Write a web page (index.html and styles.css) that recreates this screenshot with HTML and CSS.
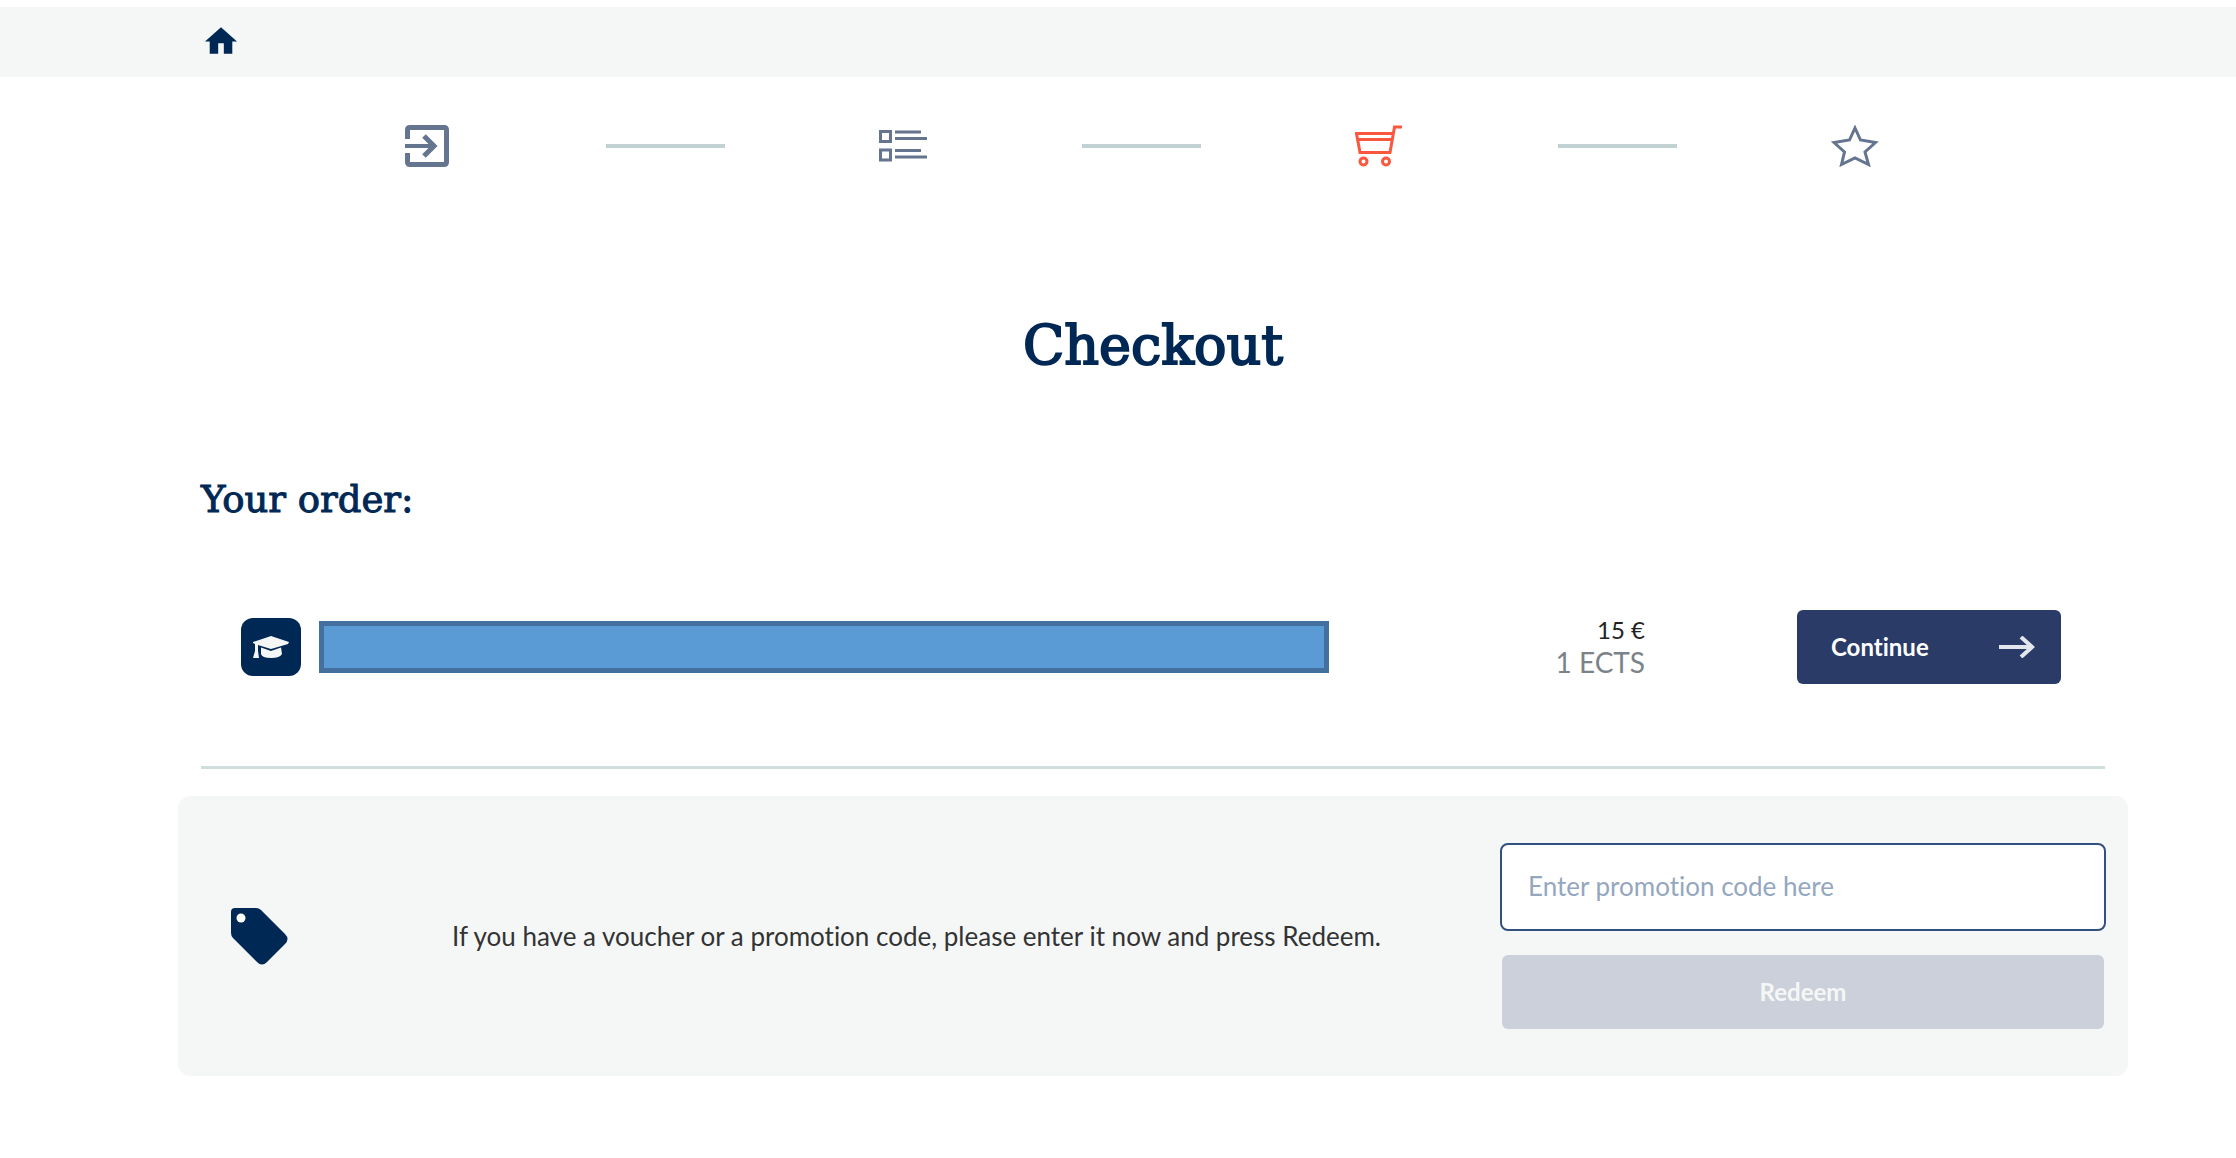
FILE: index.html
```html
<!DOCTYPE html>
<html lang="en">
	<head>
		<meta charset="utf-8">
		<title>Checkout</title>
		<link rel="stylesheet" href="styles.css">
	</head>
	<body>
		<header class="topbar">
			<a class="home" href="#" aria-label="Home">
				<svg width="32" height="27" viewBox="0 0 34 28"><path d="M17 0 34 15H29V28H20V17H14V28H5V15H0Z" fill="#002855"/></svg>
			</a>
		</header>
		<main class="container">
			<!-- progress -->
			<div class="steps">
				<div class="step">
					<svg width="44" height="42" viewBox="0 0 44 42" fill="none" stroke="#65758f" stroke-width="5">
						<path d="M2.500 14V5Q2.500 2.500 5 2.500H39Q41.500 2.500 41.500 5V37Q41.500 39.500 39 39.500H5Q2.500 39.500 2.500 37V28"/>
						<path d="M0 21H28" stroke-width="4"/>
						<path d="M19 11 29 21 19 31"/>
					</svg>
				</div>
				<div class="step"><span class="line"></span></div>
				<div class="step">
					<svg width="48" height="32" viewBox="0 0 48 32" fill="none" stroke="#65758f" stroke-width="3">
						<path d="M1.500 1.500H11.500V11.500H1.500ZM1.500 20H11.500V30H1.500Z"/>
						<path d="M16 2H42M16 8.500H48M16 20.500H42M16 27H48"/>
					</svg>
				</div>
				<div class="step"><span class="line"></span></div>
				<div class="step">
					<svg width="48" height="42" viewBox="0 0 48 42" fill="none" stroke="#fa573f" stroke-width="3">
						<path d="M47 2H39.500L35 27.500H5L1.500 8.500H38M3 14.500H37"/>
						<circle cx="8.500" cy="36.500" r="3.500"/>
						<circle cx="31" cy="36.500" r="3.500"/>
					</svg>
				</div>
				<div class="step"><span class="line"></span></div>
				<div class="step">
					<svg width="48" height="42" viewBox="0 0 48 42" fill="none" stroke="#65758f" stroke-width="3">
						<path d="M24 3 29.500 15 44.500 17.500 34 27 37.500 39.500 24 33 10.500 39.500 13.500 27 3 17.500 18.500 15Z"/>
					</svg>
				</div>
			</div>

			<h1>Checkout</h1>
			<h2>Your order:</h2>

			<div class="order">
				<span class="badge">
					<svg width="36" height="22" viewBox="0 0 36 22" fill="#f5f7f7">
						<path d="M18 0 36 6 35 8 18 13 5 9V15L6 22H0L2 15V8L0 7V6Z"/>
						<path d="M8 11.500 18 15 28 11.500 29 18Q27 22 18 22T8 18Z"/>
					</svg>
				</span>
				<div class="course"></div>
				<div class="price">
					<div>15 €</div>
					<div class="ects">1 ECTS</div>
				</div>
				<button class="btn continue" type="button">
					Continue
					<svg width="36" height="22" viewBox="0 0 36 22" fill="none" stroke="#e4e6ee" stroke-width="4"><path d="M0 11H33M22 1 33 11 22 21"/></svg>
				</button>
			</div>

			<form class="voucher">
				<svg class="tag" width="58" height="58" viewBox="0 0 58 58">
					<path d="M5 1H26Q29 1 31 3L55 27Q60 32 55 37L37 55Q32 60 27 55L3 31Q1 29 1 26V5Q1 1 5 1Z" fill="#002855"/>
					<circle cx="11" cy="11" r="4.500" fill="#fff"/>
				</svg>
				<label for="code">If you have a voucher or a promotion code, please enter it now and press Redeem.</label>
				<div class="redeem">
					<input type="text" id="code" placeholder="Enter promotion code here">
					<button class="btn" type="submit" disabled>Redeem</button>
				</div>
			</form>
		</main>
	</body>
</html>
```

FILE: styles.css
```css
*{
	box-sizing: border-box;
	margin: 0;
	padding: 0;
}
body{
	background-color: #fff;
	color: #333;
	font: 24px/32px Lato, sans-serif;
	font-variant-ligatures: none;
}
svg{
	display: block;
	flex: none;
}
.topbar{
	display: flex;
	align-items: center;
	height: 70px;
	margin-top: 7px;
	padding: 0 205px 4px;
	background-color: #f5f7f7;
}
.container{
	margin: 0 131px 0 201px;
}
/* progress */
.steps{
	display: grid;
	grid-template-columns: repeat(7, 1fr);
	margin: 47px 131px 0 107px;
}
.step{
	display: flex;
	align-items: center;
	justify-content: center;
	height: 44px;
}
.line{
	width: 50%;
	height: 4px;
	background-color: #c2d2d2;
}
h1, h2{
	color: #002855;
	font-family: "DejaVu Serif", serif;
	font-weight: normal;
	-webkit-text-stroke: 1px #002855;
}
h1{
	margin-top: 140px;
	font-size: 54px;
	line-height: 76px;
	text-align: center;
	-webkit-text-stroke-width: 2px;
}
h2{
	margin-top: 92px;
	font-size: 37px;
	line-height: 48px;
}
/* order row */
.order{
	display: flex;
	align-items: center;
	height: 160px;
	margin-top: 85px;
	padding: 0 44px 82px 40px;
	border-bottom: 3px solid #d0dddd;
}
.badge{
	display: flex;
	flex: none;
	align-items: center;
	justify-content: center;
	width: 60px;
	height: 58px;
	border-radius: 12px;
	background-color: #002855;
}
.course{
	flex: 1;
	height: 52px;
	margin-left: 18px;
	border: 5px solid #43709f;
	background-color: #5b9bd5;
}
.price{
	width: 316px;
	padding-bottom: 2px;
	text-align: right;
	color: #222;
}
.ects{
	color: #7b8388;
	font-size: 28px;
}
.btn{
	height: 74px;
	border: 0;
	border-radius: 6px;
	background-color: #293b66;
	color: #fff;
	font: bold 24px/32px Lato, sans-serif;
	font-variant-ligatures: none;
}
.continue{
	display: flex;
	flex: none;
	align-items: center;
	justify-content: space-between;
	width: 264px;
	margin-left: 152px;
	padding: 0 26px 0 34px;
}
/* promotion code */
.voucher{
	display: flex;
	align-items: center;
	height: 280px;
	margin: 27px -23px 0;
	padding: 0 22px 0 52px;
	border-radius: 12px;
	background-color: #f5f7f7;
}
.voucher label{
	flex: 1;
	margin-left: 164px;
	font-size: 26px;
}
.redeem{
	display: flex;
	flex-direction: column;
	width: 606px;
	gap: 24px;
}
.redeem input{
	height: 88px;
	padding: 0 26px 2px;
	border: 2px solid #325080;
	border-radius: 8px;
	background-color: #fff;
	font: 26px/32px Lato, sans-serif;
	font-variant-ligatures: none;
}
.redeem input::placeholder{
	color: #94a7bf;
}
.redeem .btn{
	margin: 0 2px;
}
.redeem .btn:disabled{
	background-color: #ccd0da;
	color: #f5f7f7;
}
```
